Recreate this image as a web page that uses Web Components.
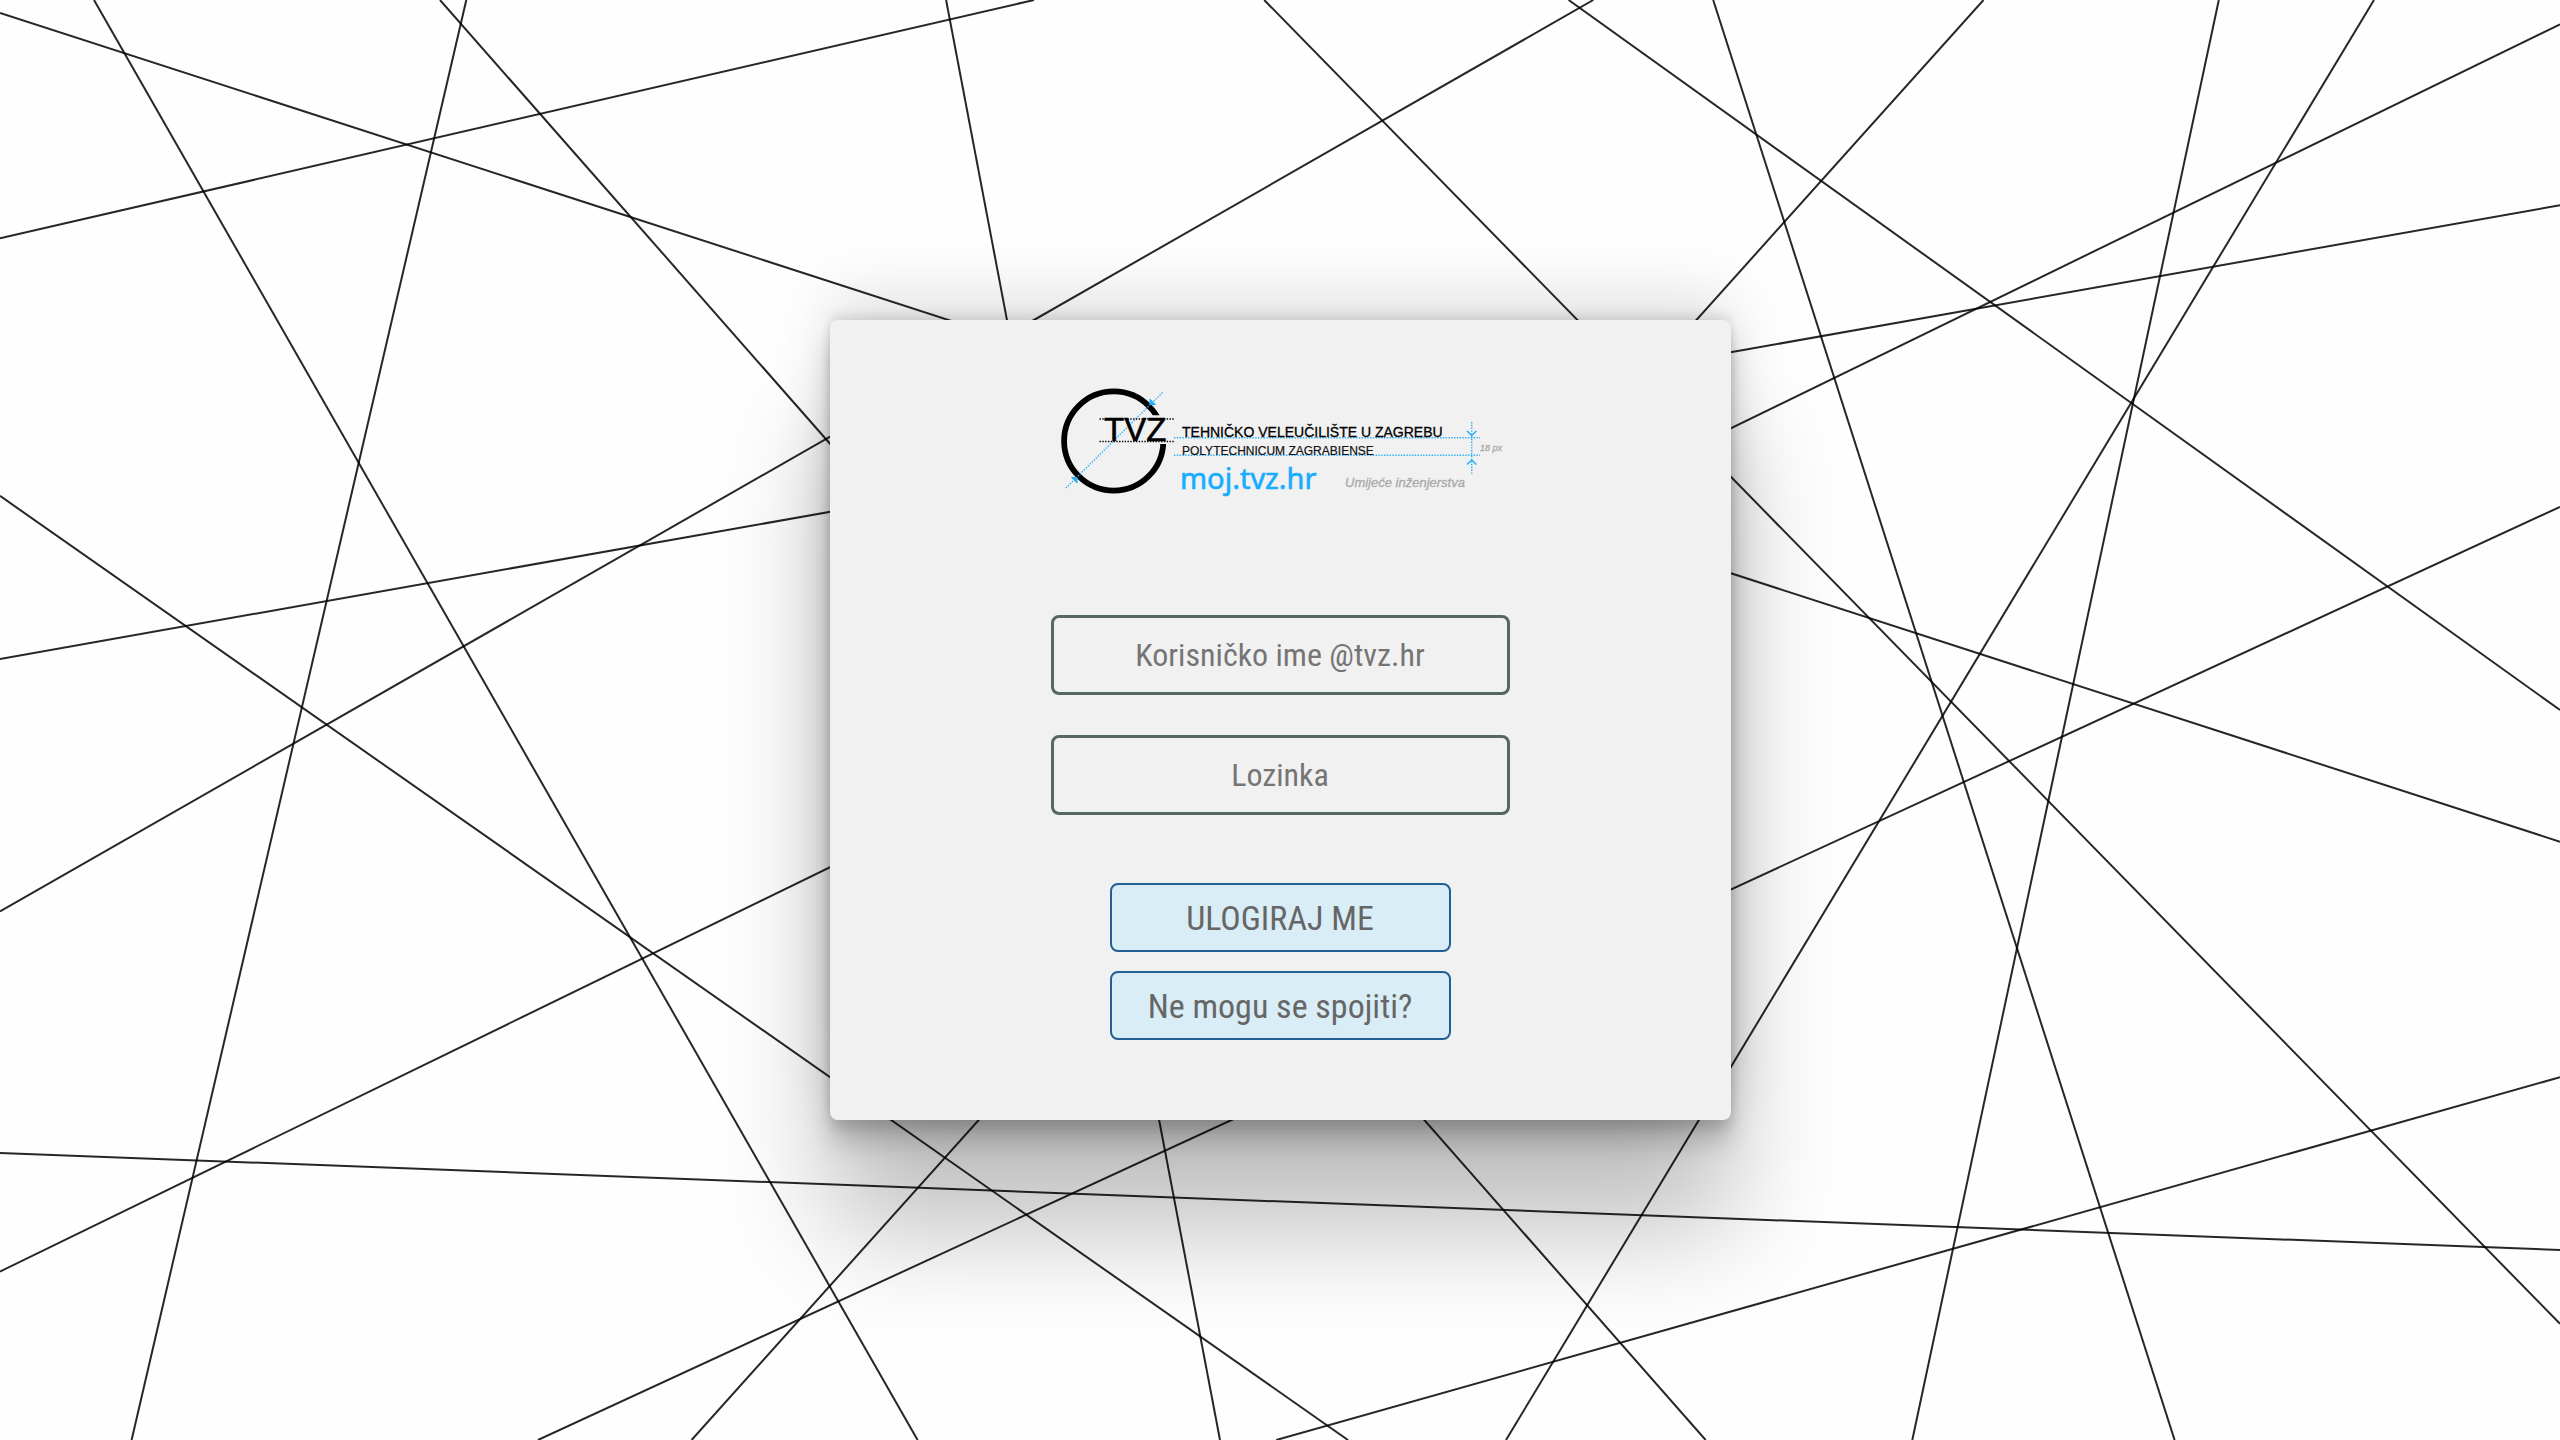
<!DOCTYPE html>
<html lang="hr">
<head>
<meta charset="utf-8">
<title>moj.tvz.hr</title>
<style>
  html, body { margin: 0; min-height: 100%; }
  body { background: #fefefe; font-family: "Roboto Condensed", "Liberation Sans Narrow", Roboto, sans-serif; }
</style>
</head>
<body>
<login-page>
  <login-card>
    <tvz-logo slot="logo"></tvz-logo>
    <text-field name="username" type="text" hint="Korisničko ime @tvz.hr"></text-field>
    <text-field name="password" type="password" hint="Lozinka"></text-field>
    <action-button slot="actions" type="submit">ULOGIRAJ ME</action-button>
    <action-button slot="actions" type="button">Ne mogu se spojiti?</action-button>
  </login-card>
</login-page>

<template id="login-page">
  <style>
    :host { display: grid; place-items: center; min-height: 100vh; position: relative; overflow: hidden; }
    svg { position: absolute; inset: 0; width: 100%; height: 100%; }
    path { fill: none; stroke: #000; stroke-opacity: .85; stroke-width: 2; }
    main { position: relative; }
  </style>
  <svg viewBox="0 0 2560 1440" preserveAspectRatio="xMidYMid slice" aria-hidden="true">
    <path d="M0 12.9L2560 841.7"/>
    <path d="M0 238.4L1034 0"/>
    <path d="M94 0L917.6 1440"/>
    <path d="M466.3 0L131.6 1440"/>
    <path d="M440 0L1705.6 1440"/>
    <path d="M0 495.9L1348 1440"/>
    <path d="M0 658.9L2560 205.3"/>
    <path d="M0 911.5L1593.3 0"/>
    <path d="M0 1271.5L2560 24.3"/>
    <path d="M0 1153L2560 1250"/>
    <path d="M538 1440L2560 506.9"/>
    <path d="M691.6 1440L1983.5 0"/>
    <path d="M946.1 0L1220 1440"/>
    <path d="M1264.2 0L2560 1323.8"/>
    <path d="M1568.6 0L2560 710"/>
    <path d="M1713.2 0L2174.6 1440"/>
    <path d="M2218.8 0L1912.3 1440"/>
    <path d="M2374 0L1506 1440"/>
    <path d="M1276.3 1440L2560 1077.2"/>
  </svg>
  <main><slot></slot></main>
</template>

<template id="login-card">
  <style>
    :host {
      display: block; box-sizing: border-box; width: 901px; max-width: 100vw; padding: 60px 40px 80px;
      background: #f1f1f1; border-radius: 8px;
      box-shadow: 0 108px 110px rgba(0,0,0,.25), 0 -24px 60px rgba(0,0,0,.12), 0 8px 12px rgba(0,0,0,.12),
        0 24px 26px rgba(0,0,0,.17), 0 -6px 10px rgba(0,0,0,.09);
    }
    form { display: flex; flex-direction: column; align-items: center; }
    .fields { display: flex; flex-direction: column; gap: 40px; width: 459px; max-width: 100%; margin: 115px 0 68px; }
    .actions { display: flex; flex-direction: column; gap: 19px; width: 341px; max-width: 100%; }
  </style>
  <form>
    <slot name="logo"></slot>
    <div class="fields"><slot></slot></div>
    <div class="actions"><slot name="actions"></slot></div>
  </form>
</template>

<template id="text-field">
  <style>
    :host { display: block; }
    input {
      display: block; box-sizing: border-box; width: 100%; height: 80px; padding: 0 16px; margin: 0;
      border: 3px solid #556664; border-radius: 8px; background: transparent;
      font: inherit; font-size: 32px; text-align: center; color: #666; outline: none;
    }
    input::placeholder { color: #757575; opacity: 1; }
  </style>
  <input>
</template>

<template id="action-button">
  <style>
    :host { display: block; }
    button {
      display: block; box-sizing: border-box; width: 100%; height: 69px; padding: 0; margin: 0;
      border: 2px solid #235f93; border-radius: 8px; background: #d9edf7;
      font: inherit; font-size: 34px; color: #666; cursor: pointer;
    }
  </style>
  <button><slot></slot></button>
</template>

<template id="tvz-logo">
  <style>
    :host { display: block; width: 460px; max-width: 100%; }
    svg { display: block; width: 100%; height: auto; font-family: "Liberation Sans", sans-serif; }
    .dots { fill: none; stroke-width: 1.4; stroke-dasharray: 1.4 1.4; }
    .blue { stroke: #2ab0fa; }
    .black { stroke: #000; }
    .arrow { fill: none; stroke: #2ab0fa; stroke-width: 1.6; }
    .hand { font-family: "Liberation Sans", cursive; font-style: italic; fill: #a9a9a9; stroke: #a9a9a9; stroke-width: .3; }
  </style>
  <svg viewBox="1050 380 460 120" role="img" aria-label="Tehničko veleučilište u Zagrebu">
    <clipPath id="ring"><path clip-rule="evenodd" d="M1050 380H1180V500H1050ZM1125 415.3V444H1180V415.3Z"/></clipPath>
    <circle cx="1113.7" cy="441" r="49.6" fill="none" stroke="#000" stroke-width="5.8" clip-path="url(#ring)"/>
    <path class="dots blue" d="M1066 488L1163 392"/>
    <path d="M1150 404.500V399L1155.500 404.500ZM1077 477.500V483L1071.500 477.500Z" fill="#2ab0fa" stroke="#2ab0fa"/>
    <path class="dots black" d="M1099.500 419H1174M1099.500 441.500H1174"/>
    <text x="1104" y="441" font-size="33" stroke="#000" stroke-width=".6">TVZ</text>
    <path class="dots blue" d="M1174 437.700H1480M1174 455.300H1480M1471.700 422V474"/>
    <path class="arrow" d="M1467 431L1471.700 435.500L1476.400 431M1467 464.500L1471.700 460L1476.400 464.500"/>
    <text x="1182" y="437" font-size="14" stroke="#000" stroke-width=".3">TEHNIČKO VELEUČILIŠTE U ZAGREBU</text>
    <text x="1182" y="455" font-size="12" fill="#111" stroke="#111" stroke-width=".2">POLYTECHNICUM ZAGRABIENSE</text>
    <text x="1180" y="489" font-size="29" fill="#16adff" stroke="#16adff" stroke-width=".6" font-family="Noto Sans, sans-serif">moj.tvz.hr</text>
    <text class="hand" x="1345" y="487" font-size="13">Umijeće inženjerstva</text>
    <text class="hand" x="1480" y="451" font-size="9">18 px</text>
  </svg>
</template>

<script>
  class TemplateElement extends HTMLElement {
    constructor() {
      super();
      const template = document.getElementById(this.localName);
      this.attachShadow({ mode: "open" }).append(template.content.cloneNode(true));
    }
  }

  class LoginPage extends TemplateElement {}
  class LoginCard extends TemplateElement {}
  class TvzLogo extends TemplateElement {}

  class TextField extends TemplateElement {
    connectedCallback() {
      const input = this.shadowRoot.querySelector("input");
      const hint = this.getAttribute("hint");
      input.type = this.getAttribute("type");
      input.name = this.getAttribute("name");
      input.placeholder = hint;
      input.setAttribute("aria-label", hint);
    }
  }

  class ActionButton extends TemplateElement {
    connectedCallback() {
      this.shadowRoot.querySelector("button").type = this.getAttribute("type");
    }
  }

  customElements.define("login-page", LoginPage);
  customElements.define("login-card", LoginCard);
  customElements.define("tvz-logo", TvzLogo);
  customElements.define("text-field", TextField);
  customElements.define("action-button", ActionButton);
</script>
</body>
</html>
